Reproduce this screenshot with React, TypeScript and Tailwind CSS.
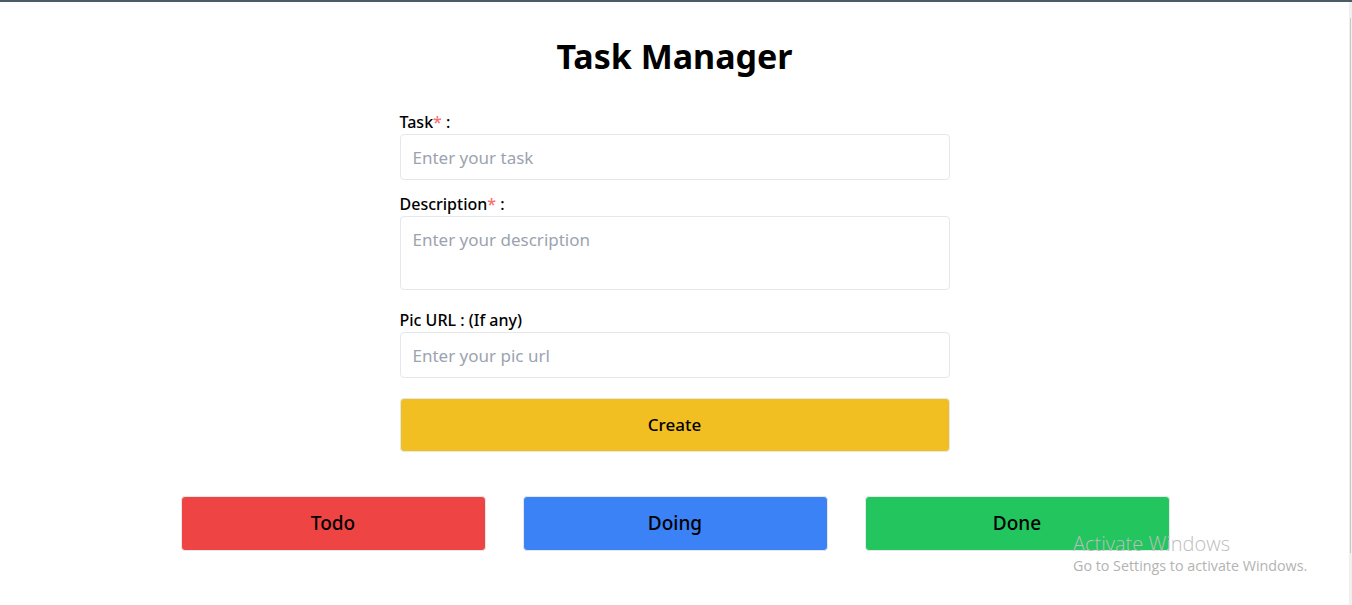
import React from "react";

export default function App() {
  const font = { fontFamily: '"Noto Sans", "Open Sans", Arial, sans-serif' };
  return (
    <div className="relative flex h-[605px] w-[1352px] overflow-hidden border-t-2 border-[#4d5b63] bg-white text-black" style={font}>
      <main className="flex flex-1 flex-col items-center">
        <h1 className="mt-[34px] text-[34px] font-bold leading-[40px]">Task Manager</h1>
        <form className="mt-[34px] flex w-[550px] flex-col" onSubmit={(e) => e.preventDefault()}>
          <label className="text-[16px] font-medium leading-[24px]">
            Task<span className="text-[#f87171]">*</span> :
          </label>
          <input
            className="h-[46px] w-full rounded-[4px] border border-[#e5e7eb] px-[12px] text-[17px] outline-none placeholder:text-[#9ca3af]"
            placeholder="Enter your task"
          />
          <label className="mt-[12px] text-[16px] font-medium leading-[24px]">
            Description<span className="text-[#f87171]">*</span> :
          </label>
          <textarea
            className="h-[74px] w-full resize-none rounded-[4px] border border-[#e5e7eb] px-[12px] py-[10px] text-[17px] leading-[26px] outline-none placeholder:text-[#9ca3af]"
            placeholder="Enter your description"
          />
          <label className="mt-[18px] text-[16px] font-medium leading-[24px]">Pic URL : (If any)</label>
          <input
            className="h-[46px] w-full rounded-[4px] border border-[#e5e7eb] px-[12px] text-[17px] outline-none placeholder:text-[#9ca3af]"
            placeholder="Enter your pic url"
          />
          <button
            type="submit"
            className="mt-[20px] h-[54px] w-full rounded-[4px] border border-[#e5e7eb] bg-[#f2bf22] text-[17px] font-medium"
          >
            Create
          </button>
        </form>
        <div className="mt-[44px] flex gap-[37px] pl-[1px]">
          <button className="h-[55px] w-[305px] rounded-[4px] border border-[#e5e7eb] bg-[#ef4444] text-[19px] font-medium">
            Todo
          </button>
          <button className="h-[55px] w-[305px] rounded-[4px] border border-[#e5e7eb] bg-[#3b82f6] text-[19px] font-medium">
            Doing
          </button>
          <button className="h-[55px] w-[305px] rounded-[4px] border border-[#e5e7eb] bg-[#22c55e] text-[19px] font-medium">
            Done
          </button>
        </div>
      </main>
      <aside className="flex w-[3px] flex-col bg-[#f0f0f0]">
        <div className="ml-[1px] mt-[16px] h-[535px] w-[1px] bg-[#c8c8c8]" />
      </aside>
      <div className="pointer-events-none absolute left-[1073px] top-[529px] flex flex-col" style={{ fontFamily: '"Open Sans", "Noto Sans", sans-serif' }}>
        <span className="text-[20px] font-light leading-[26px] text-[#bdbdbd]">Activate Windows</span>
        <span className="text-[14.3px] leading-[18px] text-[#b3b3b3]">Go to Settings to activate Windows.</span>
      </div>
    </div>
  );
}
